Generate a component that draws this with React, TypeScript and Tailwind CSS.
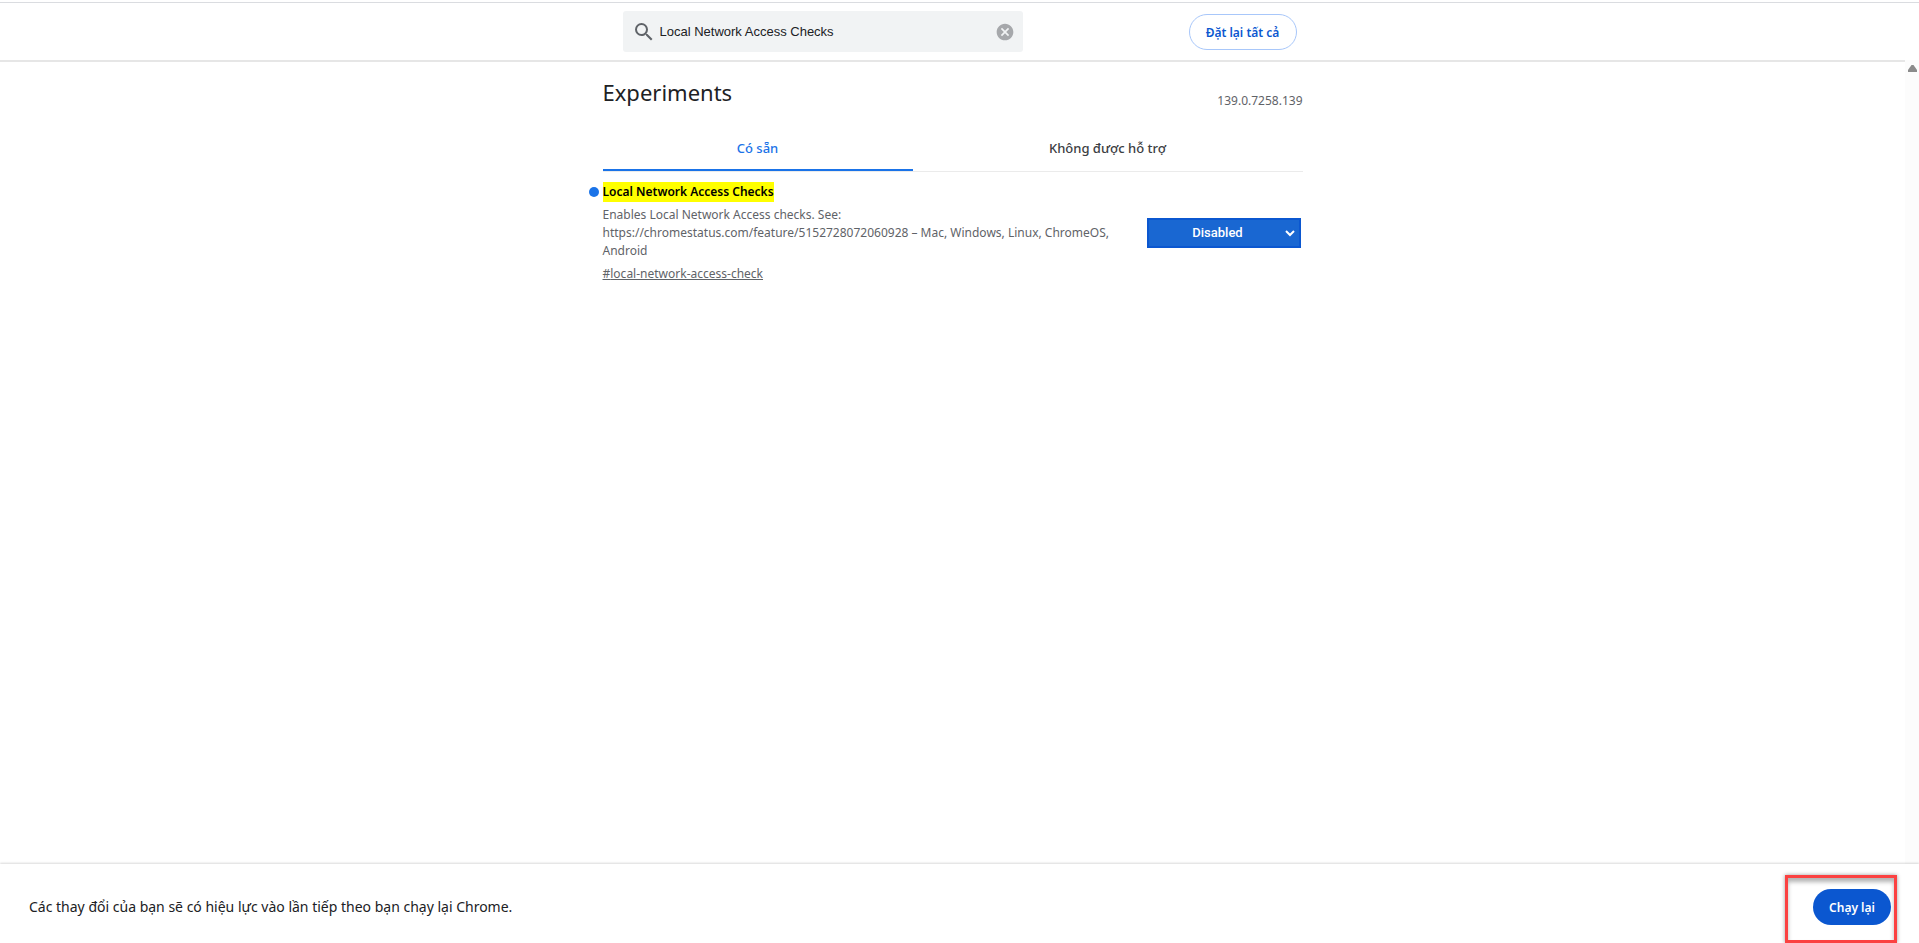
import React, { useState } from 'react';

const FLAGS = [
  {
    id: 'local-network-access-check',
    name: 'Local Network Access Checks',
    description:
      'Enables Local Network Access checks. See: https://chromestatus.com/feature/5152728072060928 – Mac, Windows, Linux, ChromeOS, Android',
  },
];

const SearchBar: React.FC = () => {
  const [query, setQuery] = useState('Local Network Access Checks');

  return (
    <header className="relative z-10 border-t border-[#dadce0] bg-white pr-3.5">
      <div className="mx-auto flex h-[57px] max-w-[700px] items-center justify-between pl-5 pr-1.5">
        <label className="flex h-[41px] w-[400px] items-center rounded-[3px] bg-[#f1f3f4] pl-[9px] pr-2">
          <svg className="h-6 w-6 shrink-0" viewBox="0 0 24 24" fill="#5f6368" aria-hidden="true">
            <path d="M15.5 14h-.79l-.28-.27A6.471 6.471 0 0 0 16 9.5 6.5 6.5 0 1 0 9.5 16c1.61 0 3.09-.59 4.23-1.57l.27.28v.79l5 4.99L20.49 19l-4.99-5zm-6 0C7.01 14 5 11.99 5 9.5S7.01 5 9.5 5 14 7.01 14 9.5 11.99 14 9.5 14z" />
          </svg>
          <input
            type="text"
            aria-label="Search flags"
            value={query}
            onChange={(e) => setQuery(e.target.value)}
            className="ml-1 min-w-0 flex-1 bg-transparent font-['Liberation_Sans',sans-serif] text-[13px] text-[#202124] outline-none"
          />
          <button type="button" aria-label="Clear search" onClick={() => setQuery('')}>
            <svg className="h-5 w-5" viewBox="0 0 24 24" fill="#a6a8ab" aria-hidden="true">
              <path d="M12 2C6.47 2 2 6.47 2 12s4.47 10 10 10 10-4.47 10-10S17.53 2 12 2zm5 13.59L15.59 17 12 13.41 8.41 17 7 15.59 10.59 12 7 8.41 8.41 7 12 10.59 15.59 7 17 8.41 13.41 12 17 15.59z" />
            </svg>
          </button>
        </label>
        <button
          type="button"
          className="h-9 w-[108px] rounded-full border border-[#a8c7fa] pt-0.5 text-[12px] font-semibold text-[#0b57d0]"
        >
          Đặt lại tất cả
        </button>
      </div>
      <div className="-mr-3.5 flex">
        <div className="h-0.5 flex-1 bg-[#e6e6e6]" />
        <div className="w-3.5 bg-[#fcfcfc]" />
      </div>
    </header>
  );
};

const App: React.FC = () => {
  return (
    <div className="flex min-h-screen flex-col bg-white pt-0.5 font-['Noto_Sans','Open_Sans',sans-serif] text-[#202124]">
      <SearchBar />

      <div className="flex flex-1">
        <main className="flex-1">
          <div className="mx-auto max-w-[700px] pt-3.5">
            <div className="flex items-end justify-between">
              <h1 className="mb-[3px] text-[22px] leading-8">Experiments</h1>
              <span className="text-[12px] leading-5 text-[#5f6368]">139.0.7258.139</span>
            </div>

            {/* Tabs */}
            <div role="tablist" className="mt-[15px] flex border-b border-[#ebebeb] text-[13px] font-medium">
              <button
                type="button"
                role="tab"
                aria-selected="true"
                className="h-[45px] w-[310px] border-b-2 border-[#1a73e8] pt-0.5 text-[#1a73e8]"
              >
                Có sẵn
              </button>
              <button type="button" role="tab" aria-selected="false" className="h-[45px] flex-1 text-[#3c4043]">
                Không được hỗ trợ
              </button>
            </div>

            {FLAGS.map((flag) => (
              <section key={flag.id} className="flex items-center justify-between pt-2.5">
                <div className="w-[524px]">
                  <h2 className="relative text-[12px] leading-5 font-semibold text-black">
                    <span className="absolute top-[5px] -left-3.5 h-2.5 w-2.5 rounded-full bg-[#1a73e8]" />
                    <label htmlFor={flag.id} className="inline-block bg-[#ffff00]">
                      {flag.name}
                    </label>
                  </h2>
                  <p className="mt-1 text-[12px] leading-[18px] text-[#5f6368]">{flag.description}</p>
                  <a href={`#${flag.id}`} className="mt-[5px] block text-[12px] leading-[18px] text-[#5f6368] underline">
                    #{flag.id}
                  </a>
                </div>
                <div className="relative mr-0.5">
                  <select
                    id={flag.id}
                    defaultValue="Disabled"
                    className="block h-[30px] w-[154px] appearance-none border-2 border-[#0b57d0] bg-[#1967d2] pr-3 text-center font-['Roboto','Liberation_Sans',sans-serif] text-[13px] font-medium text-white"
                  >
                    <option>Default</option>
                    <option>Enabled</option>
                    <option>Disabled</option>
                  </select>
                  <svg
                    className="pointer-events-none absolute top-3 right-1.5 h-[7px] w-[10px]"
                    viewBox="0 0 10 7"
                    fill="none"
                    stroke="#fff"
                    strokeWidth="2"
                    aria-hidden="true"
                  >
                    <path d="M1 1l4 4 4-4" />
                  </svg>
                </div>
              </section>
            ))}
          </div>
        </main>

        {/* Scrollbar track */}
        <div className="w-3.5 bg-[#fcfcfc] pt-[3px]">
          <svg className="mx-auto h-[7px] w-[9px]" viewBox="0 0 9 7" fill="#8b8b8b" aria-hidden="true">
            <path d="M3.5 0h2L9 5v2H0V5z" />
          </svg>
        </div>
      </div>

      <footer className="relative z-10 flex h-[79px] items-center justify-between bg-white pr-7 pl-[29px] pt-1.5 shadow-[0_-1px_2px_rgba(0,0,0,0.15)]">
        <p className="text-[14px]">Các thay đổi của bạn sẽ có hiệu lực vào lần tiếp theo bạn chạy lại Chrome.</p>
        <div className="relative">
          <button
            type="button"
            className="block h-9 w-[78px] rounded-full bg-[#0b57d0] pt-0.5 text-[12px] font-semibold text-white"
          >
            Chạy lại
          </button>
          {/* Callout frame */}
          <div className="pointer-events-none absolute -top-3.5 -right-1.5 h-[68px] w-28 border-3 border-[#fb4141] shadow-[0_0_4px_rgba(0,0,0,0.4),inset_0_4px_4px_rgba(0,0,0,0.3)]" />
        </div>
      </footer>
    </div>
  );
};

export default App;
